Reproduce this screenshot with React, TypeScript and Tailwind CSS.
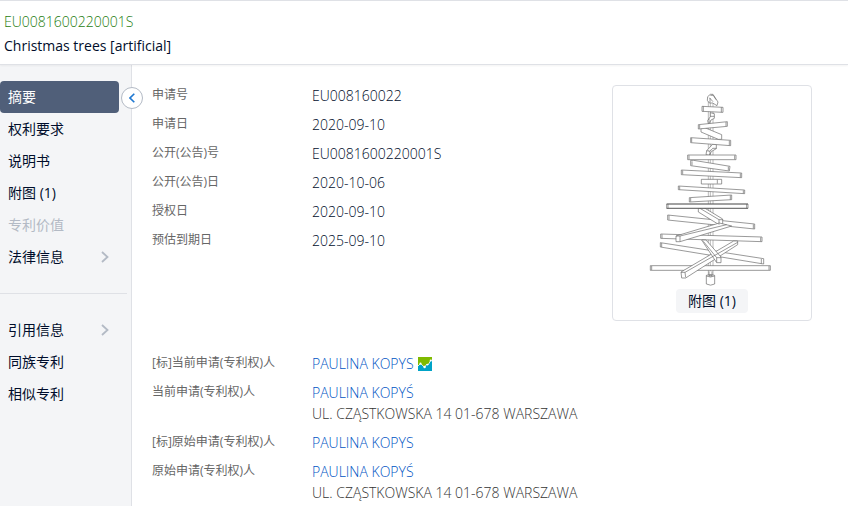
import { ReactNode } from "react";

interface NavItem {
  label: string;
  active?: boolean;
  disabled?: boolean;
  expandable?: boolean;
}

interface Party {
  label: string;
  name: string;
  address?: string;
  badge?: boolean;
}

const primaryNav: NavItem[] = [
  { label: "摘要", active: true },
  { label: "权利要求" },
  { label: "说明书" },
  { label: "附图 (1)" },
  { label: "专利价值", disabled: true },
  { label: "法律信息", expandable: true },
];

const secondaryNav: NavItem[] = [
  { label: "引用信息", expandable: true },
  { label: "同族专利" },
  { label: "相似专利" },
];

const details = [
  { label: "申请号", value: "EU008160022" },
  { label: "申请日", value: "2020-09-10" },
  { label: "公开(公告)号", value: "EU0081600220001S" },
  { label: "公开(公告)日", value: "2020-10-06" },
  { label: "授权日", value: "2020-09-10" },
  { label: "预估到期日", value: "2025-09-10" },
];

const address = "UL. CZĄSTKOWSKA 14 01-678 WARSZAWA";

const parties: Party[] = [
  { label: "[标]当前申请(专利权)人", name: "PAULINA KOPYS", badge: true },
  { label: "当前申请(专利权)人", name: "PAULINA KOPYŚ", address },
  { label: "[标]原始申请(专利权)人", name: "PAULINA KOPYS" },
  { label: "原始申请(专利权)人", name: "PAULINA KOPYŚ", address },
];

// Back to front, so each beam hides what is behind it
const beams = [
  "306,91 369,94 369,109 306,106",
  "303,158 312,154 365,176 365,190 355,190 303,168",
  "295,146 382,137 382,151 295,159",
  "272,185 392,193 392,209 272,200",
  "272,253 281,253 390,271 388,285 272,269",
  "263,237 408,237 408,251 263,251",
  "244,282 425,291 425,305 244,296",
  "304,310 365,310 365,324 304,324",
  "235,330 434,342 434,353 235,341",
  "268,365 395,357 395,371 268,378",
  "203,417 464,444 464,459 203,432",
  "295,397 312,395 368,429 368,446 357,446 295,408",
  "200,384 444,384 444,397 200,397",
  "182,474 486,483 486,497 182,487",
  "228,480 358,441 395,450 240,497 228,497",
  "181,500 491,548 491,564 181,513",
  "151,569 511,569 511,583 151,583",
  "243,588 401,495 413,495 413,506 257,606 245,606",
  "305,492 318,492 363,543 363,560 350,560",
];

const edges = [
  "M310 91v15M364 94v15M299 147v11M378 138v12M275 186v13M388 194v14",
  "M267 238v12M404 238v12M276 256v12M385 272v11M248 283v12M421 292v12",
  "M352 311v12M239 331v10M430 343v9M272 366v11M391 358v13",
  "M204 384v13M440 384v13M207 418v13M460 445v13M357 431h11M357 431v15M300 397l57 34",
  "M186 475v12M482 484v12M228 480h12v16M240 480l140-34M185 501v12M484 549v14",
  "M155 570v12M507 570v12M243 589h12l2 15M255 589L413 499M350 545h13M350 545v14M310 496l40 49",
];

function TreeDrawing() {
  return (
    <svg
      viewBox="153 51 366 582"
      className="h-[194px] w-[122px] overflow-visible"
      fill="white"
      stroke="#666"
      strokeWidth="2"
      strokeLinejoin="round"
      role="img"
      aria-label="Christmas trees [artificial]"
    >
      <path d="M325 72h14v526h-14zM331 72v526" stroke="#999" />
      <path d="M323 62l8-7h8l5 8 10 15-3 11-13-8h-10l-6-8zM328 65l11 12M331 58h9l8 13M330 66v14" />
      <path d="M331 110l12 3v14l-10 5-7 13-3-11 8-12zM331 121h12M327 128v12" />
      <path d="M338 205h11v13l-14 8-8 12-9-2 2-12zM320 224l10 2 8-9h11M330 226v10" />
      {beams.map((points) => (
        <polygon key={points} points={points} />
      ))}
      {edges.map((d) => (
        <path key={d} d={d} fill="none" />
      ))}
      <path d="M200 384h244M200 397h244" stroke="#555" strokeWidth="2.2" fill="none" />
      <path d="M319 598q12-5 25 0v26q-12 7-25 0zM319 600q12 6 25 0M327 586v14h9v-14" />
    </svg>
  );
}

function TrendBadge() {
  return (
    <svg viewBox="0 0 14 14" className="h-3.5 w-3.5" aria-hidden="true">
      <path d="M0 0h14v14H0z" fill="#7fba00" />
      <path d="M0 9l2.5-2.5 4 3.8L9 7l1 1 3-5h1v11H0z" fill="#00a3c7" />
      <path d="M0 9l2.5-2.5 4 3.8L9 7l1 1 3-5" fill="none" stroke="white" strokeWidth="0.8" />
      <g fill="white">
        <circle cx="2.5" cy="6.7" r="1.1" />
        <circle cx="6.6" cy="10" r="1.2" />
        <circle cx="9.4" cy="7.6" r="0.9" />
        <circle cx="12.8" cy="3.5" r="1.1" />
      </g>
    </svg>
  );
}

function NavList({ items }: { items: NavItem[] }) {
  return (
    <ul className="mr-3">
      {items.map(({ label, active, disabled, expandable }) => (
        <li key={label}>
          <button
            disabled={disabled}
            className={`flex h-8 w-full items-center justify-between rounded-r pr-2.5 pl-2 text-sm ${
              active
                ? "rounded-l-sm bg-[#505f79] text-white"
                : disabled
                  ? "text-[#b3bac5]"
                  : "text-[#000d2b]"
            }`}
          >
            {label}
            {expandable && (
              <svg viewBox="0 0 8 12" className="h-3 w-2" fill="none" stroke="#b3bac5" strokeWidth="1.8">
                <path d="M1 1l5.5 5L1 11" />
              </svg>
            )}
          </button>
        </li>
      ))}
    </ul>
  );
}

function Row({ label, children }: { label: string; children: ReactNode }) {
  return (
    <div className="flex">
      <dt className="w-40 shrink-0 text-xs leading-5 text-[#666]">{label}</dt>
      <dd className="min-w-0 flex-1 leading-[21px] font-light">{children}</dd>
    </div>
  );
}

export default function App() {
  return (
    <div className="flex min-h-screen flex-col bg-white font-['Open_Sans','Noto_Sans_CJK_SC',sans-serif] text-sm text-[#000d2b]">
      <header className="z-10 border-t border-b border-[#dfe1e6] px-1 pt-[9px] pb-1.5 leading-6 shadow-xs">
        <p className="font-light text-[#1e7d10]">EU0081600220001S</p>
        <h1>Christmas trees [artificial]</h1>
      </header>

      <div className="flex flex-1">
        <aside className="relative w-[132px] shrink-0 border-r border-[#dfe1e6] bg-[#f4f5f7] pt-4">
          <nav>
            <NavList items={primaryNav} />
            <hr className="mt-5 mr-1 mb-5 border-[#dfe1e6]" />
            <NavList items={secondaryNav} />
          </nav>
          <button
            aria-label="收起"
            className="absolute top-[22px] -right-3 flex size-[22px] items-center justify-center rounded-full border border-[#b3bac5] bg-white"
          >
            <svg viewBox="0 0 6 10" className="h-2.5 w-1.5" fill="none" stroke="#1f78d1" strokeWidth="1.6">
              <path d="M5.3.7L1 5l4.3 4.3" />
            </svg>
          </button>
        </aside>

        <main className="min-w-0 flex-1 pt-5 pr-9 pl-5">
          <div className="flex items-start">
            <dl className="flex flex-1 flex-col gap-2">
              {details.map(({ label, value }) => (
                <Row key={label} label={label}>
                  {value}
                </Row>
              ))}
            </dl>
            <figure className="flex w-[200px] flex-col items-center rounded border border-[#dfe1e6] pt-[7px] pb-[7px]">
              <TreeDrawing />
              <figcaption className="mt-0.5">
                <button className="h-6 rounded bg-[#f4f5f7] px-3 text-sm">附图 (1)</button>
              </figcaption>
            </figure>
          </div>

          <dl className="mt-8 flex flex-col gap-2">
            {parties.map((party) => (
              <Row key={party.label} label={party.label}>
                <div className="flex items-center gap-1">
                  <a href="#" className="text-[#0055c4]">
                    {party.name}
                  </a>
                  {party.badge && <TrendBadge />}
                </div>
                {party.address && <p className="text-[#333]">{party.address}</p>}
              </Row>
            ))}
          </dl>
        </main>
      </div>
    </div>
  );
}
